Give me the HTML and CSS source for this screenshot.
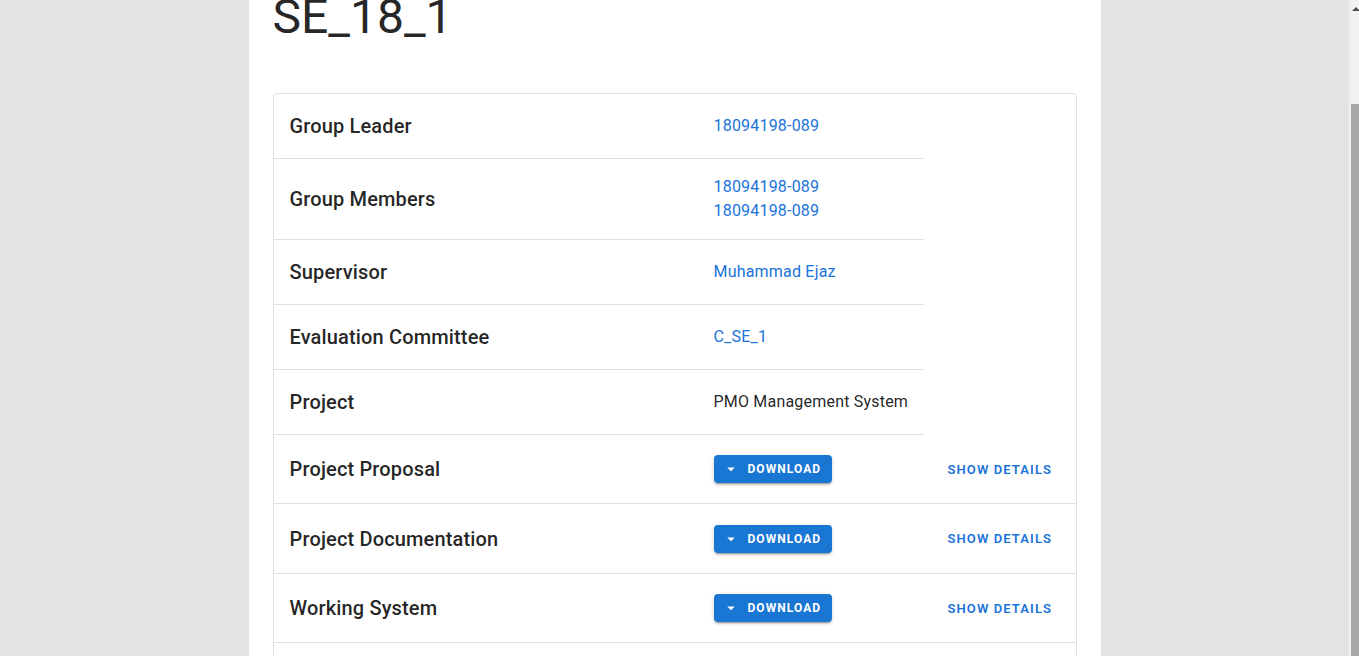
FILE: index.html
```html
<!DOCTYPE html>
<html lang="en">
<head>
<meta charset="utf-8">
<title>SE_18_1</title>
<link rel="stylesheet" href="styles.css">
</head>
<body>
<div class="screen">
  <main class="main">
    <section class="card">
      <h1 class="title">SE_18_1</h1>
      <table class="info">
        <colgroup><col class="c1"><col class="c2"><col class="c3"></colgroup>
        <tbody>
          <tr><td class="label">Group Leader</td><td class="value"><a class="link">18094198-089</a></td></tr>
          <tr><td class="label">Group Members</td><td class="value"><a class="link">18094198-089</a><br><a class="link">18094198-089</a></td></tr>
          <tr><td class="label">Supervisor</td><td class="value"><a class="link">Muhammad Ejaz</a></td></tr>
          <tr><td class="label">Evaluation Committee</td><td class="value"><a class="link">C_SE_1</a></td></tr>
          <tr><td class="label">Project</td><td class="value plain">PMO Management System</td></tr>
          <tr class="full"><td class="label">Project Proposal</td><td class="value"><button class="dl"><svg class="ico" viewBox="0 0 24 24"><path d="M7 10l5 5 5-5z"/></svg><span>Download</span></button></td><td class="act"><button class="txt">Show Details</button></td></tr>
          <tr class="full tall"><td class="label">Project Documentation</td><td class="value"><button class="dl"><svg class="ico" viewBox="0 0 24 24"><path d="M7 10l5 5 5-5z"/></svg><span>Download</span></button></td><td class="act"><button class="txt">Show Details</button></td></tr>
          <tr class="full"><td class="label">Working System</td><td class="value"><button class="dl"><svg class="ico" viewBox="0 0 24 24"><path d="M7 10l5 5 5-5z"/></svg><span>Download</span></button></td><td class="act"><button class="txt">Show Details</button></td></tr>
          <tr class="full spacer"><td></td><td class="value"></td><td></td></tr>
        </tbody>
      </table>
    </section>
  </main>
  <div class="scrollbar">
    <div class="arrow"></div>
    <div class="thumb"></div>
  </div>
</div>
</body>
</html>
```
FILE: styles.css
```css
* { box-sizing: border-box; }
html, body { margin: 0; padding: 0; height: 100%; overflow: hidden; }
body { font-family: Roboto, "Liberation Sans", sans-serif; color: rgba(0,0,0,.87); }
.screen { display: flex; height: 100vh; }
.main { flex: 1; background: #e4e4e4; overflow: hidden; }
.card {
  width: 852px;
  margin: 0 auto;
  background: #fff;
  padding: 0 24px 40px;
  min-height: 100%;
}
.title {
  margin: -7px 0 0;
  font-size: 48px;
  line-height: 48px;
  font-weight: 400;
  color: rgba(0,0,0,.87);
  padding-bottom: 52px;
}
.info {
  width: 804px;
  table-layout: fixed;
  border-collapse: separate;
  border-spacing: 0;
  border: 1px solid #e0e0e0;
  border-radius: 4px;
}
.c1 { width: 424px; }
.c2 { width: 226px; }
.c3 { width: 152px; }
.info td {
  padding: 16px;
  border-bottom: 1px solid #e0e0e0;
  vertical-align: middle;
}
.info tr:last-child td { border-bottom: none; }
.label { font-size: 20px; line-height: 32px; font-weight: 500; letter-spacing: 0.15px; }
.value { font-size: 16px; line-height: 24px; letter-spacing: 0.2px; white-space: nowrap; }
.link { color: #1a73d9; text-decoration: none; }
.plain { color: rgba(0,0,0,.87); }
.full .value { height: 68px; }
.tall .value { height: 70px; }
.info td.act { padding: 16px 8px; }
.dl {
  display: inline-flex;
  align-items: center;
  height: 28px;
  padding: 0 11px 0 8px;
  border: 0;
  border-radius: 4px;
  background: #1976d2;
  color: #fff;
  font-family: Roboto, "Liberation Sans", sans-serif;
  font-size: 12px;
  font-weight: 700;
  letter-spacing: 1.07px;
  text-transform: uppercase;
  box-shadow: 0 3px 1px -2px rgba(0,0,0,.2), 0 2px 2px 0 rgba(0,0,0,.14), 0 1px 5px 0 rgba(0,0,0,.12);
  vertical-align: middle;
}
.ico { width: 18px; height: 18px; fill: #fff; margin-right: 8px; }
.txt {
  height: 36px;
  padding: 0 16px;
  border: 0;
  background: transparent;
  color: #1a73d9;
  font-family: Roboto, "Liberation Sans", sans-serif;
  font-size: 13px;
  font-weight: 600;
  letter-spacing: 1.1px;
  text-transform: uppercase;
  white-space: nowrap;
}
.scrollbar {
  width: 10px;
  flex: none;
  background: #f1f1f1;
  position: relative;
  overflow: hidden;
}
.arrow {
  position: absolute;
  top: 7px;
  left: 3px;
  width: 0;
  height: 0;
  border-left: 4px solid transparent;
  border-right: 4px solid transparent;
  border-bottom: 4px solid #505050;
}
.thumb {
  position: absolute;
  top: 104px;
  left: 2px;
  width: 12px;
  bottom: 0;
  background: #a8a8a8;
}
```
